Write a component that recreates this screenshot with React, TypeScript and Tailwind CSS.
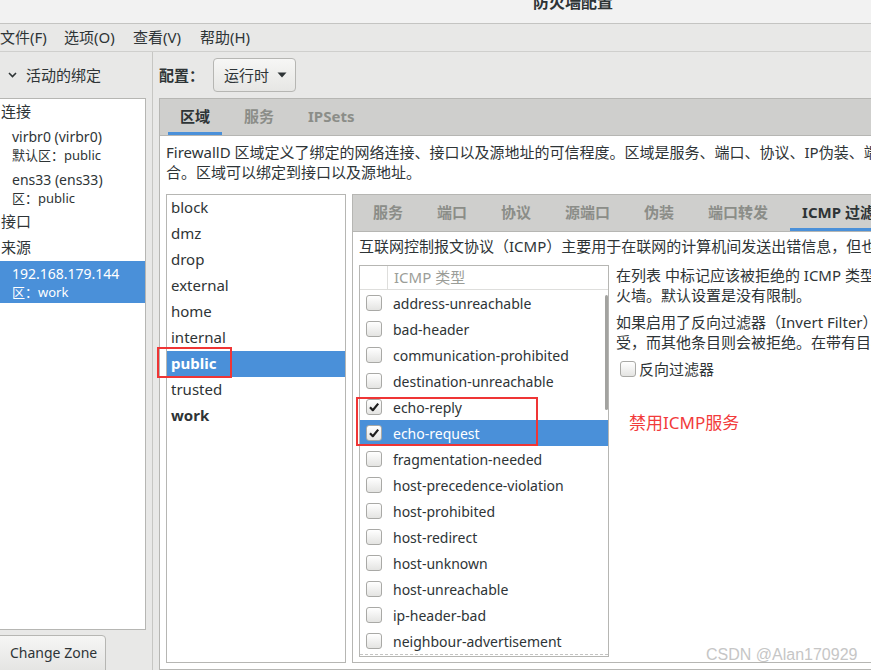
import React from 'react';

const zones = ['block', 'dmz', 'drop', 'external', 'home', 'internal', 'public', 'trusted', 'work'];
const boldZones = new Set(['public', 'work']);

const icmpTypes = [
  'address-unreachable',
  'bad-header',
  'communication-prohibited',
  'destination-unreachable',
  'echo-reply',
  'echo-request',
  'fragmentation-needed',
  'host-precedence-violation',
  'host-prohibited',
  'host-redirect',
  'host-unknown',
  'host-unreachable',
  'ip-header-bad',
  'neighbour-advertisement',
];
const checkedTypes = new Set(['echo-reply', 'echo-request']);

const Checkbox = ({ on }: { on?: boolean }) => (
  <span className="w-[16px] h-[16px] shrink-0 rounded-[3px] border border-[#a9a9a6] bg-linear-to-b from-white to-[#e4e4e2] flex items-center justify-center">
    {on && (
      <svg width="12" height="12" viewBox="0 0 12 12">
        <path d="M2 6.2 L4.8 9.2 L10.2 2.6" fill="none" stroke="#1e1e1e" strokeWidth="2.2" strokeLinejoin="round" />
      </svg>
    )}
  </span>
);

const Tab = ({ label, active }: { label: string; active?: boolean }) => (
  <div
    className={`h-full flex items-center px-[12px] pt-[2px] border-b-[3px] font-bold text-[15px] whitespace-nowrap ${
      active ? 'border-[#4a90d9] text-[#2e3436]' : 'border-transparent text-[#8b8d88]'
    }`}
  >
    {label}
  </div>
);

const App = () => {
  return (
    <div className="relative w-[871px] h-[670px] overflow-hidden bg-[#e8e8e7] text-[#2e3436] text-[14px] flex flex-col font-['Noto_Sans','Noto_Sans_CJK_SC',sans-serif]">
      {/* title bar */}
      <div className="h-[24px] shrink-0 bg-[#f2f2f2] border-b border-[#c4c4c2] overflow-hidden">
        <div className="pl-[533px] -mt-[8px] leading-[20px] text-[16px] font-bold text-[#2e3436]">防火墙配置</div>
      </div>

      {/* menu bar */}
      <div className="h-[28px] shrink-0 border-b border-[#cfcfcd] flex items-center text-[15px] whitespace-nowrap">
        <span className="w-[64px]">文件(F)</span>
        <span className="w-[69px]">选项(O)</span>
        <span className="w-[67px]">查看(V)</span>
        <span>帮助(H)</span>
      </div>

      <div className="flex flex-1 min-h-0">
        {/* left panel */}
        <div className="w-[153px] shrink-0 border-r border-[#c6c6c3] flex flex-col">
          <div className="h-[46px] shrink-0 flex items-center pl-[8px] gap-[9px] text-[15px]">
            <svg width="9" height="6" viewBox="0 0 9 6">
              <path d="M1 1 L4.5 4.5 L8 1" fill="none" stroke="#2e3436" strokeWidth="1.6" />
            </svg>
            <span>活动的绑定</span>
          </div>
          <div className="-ml-[4px] w-[150px] h-[532px] shrink-0 bg-white border border-[#b6b6b3] whitespace-nowrap">
            <div className="h-[24px] leading-[24px] pl-[4px] text-[15px]">连接</div>
            <div className="pl-[15px] pt-[4px] pb-[3px]">
              <div className="leading-[20px]">virbr0 (virbr0)</div>
              <div className="leading-[16px] text-[13px]">默认区：public</div>
            </div>
            <div className="pl-[15px] pt-[4px] pb-[3px]">
              <div className="leading-[20px]">ens33 (ens33)</div>
              <div className="leading-[16px] text-[13px]">区：public</div>
            </div>
            <div className="h-[25px] leading-[25px] pl-[4px] text-[15px]">接口</div>
            <div className="h-[27px] leading-[27px] pl-[4px] text-[15px]">来源</div>
            <div className="pl-[15px] pt-[3px] pb-[3px] bg-[#4a90d9] text-white">
              <div className="leading-[20px]">192.168.179.144</div>
              <div className="leading-[16px] text-[13px]">区：work</div>
            </div>
          </div>
          <div className="mt-[5px] -ml-[4px] w-[110px] h-[40px] shrink-0 rounded-[4px] border border-[#b6b6b3] bg-linear-to-b from-[#f6f6f5] to-[#e3e3e1] pl-[13px] pt-[6px] text-[14px] leading-[22px]">
            Change Zone
          </div>
        </div>

        {/* right panel */}
        <div className="flex-1 pl-[6px] pt-[6px] flex flex-col min-w-0">
          <div className="h-[34px] flex items-center">
            <span className="w-[54px] font-bold text-[15px]">配置：</span>
            <div className="h-[34px] w-[83px] rounded-[4px] border border-[#b6b6b3] bg-linear-to-b from-[#f6f6f5] to-[#e6e6e4] flex items-center pl-[10px] gap-[8px] text-[15px]">
              <span>运行时</span>
              <svg width="10" height="6" viewBox="0 0 10 6">
                <path d="M0.5 0.5 L9.5 0.5 L5 5.5 Z" fill="#2e3436" />
              </svg>
            </div>
          </div>

          {/* outer notebook */}
          <div className="mt-[6px] w-[740px] h-[572px] border border-[#b6b6b3] bg-white flex flex-col">
            <div className="h-[37px] shrink-0 bg-[#cfcfcd] border-b border-[#b6b6b3] flex gap-[10px] pl-[8px]">
              <Tab label="区域" active />
              <Tab label="服务" />
              <Tab label="IPSets" />
            </div>
            <div className="flex-1 min-h-0 flex flex-col px-[6px] pt-[6px] pb-[6px]">
              <div className="text-[15px] leading-[20px] whitespace-nowrap">
                <div>FirewallD 区域定义了绑定的网络连接、接口以及源地址的可信程度。区域是服务、端口、协议、IP伪装、端口/报文转发、icmp 和富规则的组</div>
                <div>合。区域可以绑定到接口以及源地址。</div>
              </div>
              <div className="mt-[12px] flex-1 min-h-0 flex">
                {/* zone list */}
                <div className="w-[180px] shrink-0 bg-white border border-[#b6b6b3]">
                  {zones.map((z) => (
                    <div
                      key={z}
                      className={`h-[26px] leading-[24px] pl-[4px] text-[15px] ${boldZones.has(z) ? 'font-bold' : ''} ${
                        z === 'public' ? 'bg-[#4a90d9] text-white' : ''
                      }`}
                    >
                      {z}
                    </div>
                  ))}
                </div>

                {/* inner notebook */}
                <div className="ml-[6px] w-[560px] shrink-0 border border-[#b6b6b3] bg-white flex flex-col">
                  <div className="h-[37px] shrink-0 bg-[#cfcfcd] border-b border-[#b6b6b3] flex gap-[10px] pl-[8px]">
                    <Tab label="服务" />
                    <Tab label="端口" />
                    <Tab label="协议" />
                    <Tab label="源端口" />
                    <Tab label="伪装" />
                    <Tab label="端口转发" />
                    <Tab label="ICMP 过滤器" active />
                  </div>
                  <div className="pl-[6px] pt-[4px] flex flex-col">
                    <div className="text-[15px] leading-[20px] whitespace-nowrap">
                      互联网控制报文协议（ICMP）主要用于在联网的计算机间发送出错信息，但也发送类似 ping 请求以及回应等信息。
                    </div>
                    <div className="mt-[9px] flex">
                      {/* icmp list */}
                      <div className="relative w-[250px] h-[392px] shrink-0 border border-[#b6b6b3] bg-white overflow-hidden">
                        <div className="h-[24px] flex border-b border-[#dededc]">
                          <div className="w-[28px] border-r border-[#dededc]" />
                          <div className="pl-[6px] leading-[22px] text-[15px] text-[#9b9d98]">ICMP 类型</div>
                        </div>
                        {icmpTypes.map((t) => (
                          <div
                            key={t}
                            className={`h-[26px] flex items-center pl-[6px] gap-[11px] text-[14px] whitespace-nowrap ${
                              t === 'echo-request' ? 'bg-[#4a90d9] text-white' : ''
                            }`}
                          >
                            <Checkbox on={checkedTypes.has(t)} />
                            <span>{t}</span>
                          </div>
                        ))}
                        <div className="border-t border-dashed border-[#c4c4c2]" />
                        <div className="absolute left-[245px] top-[29px] w-[3px] h-[115px] rounded-full bg-[#a3a3a0]" />
                      </div>

                      <div className="ml-[7px] text-[15px] leading-[20px] whitespace-nowrap">
                        <div>在列表 中标记应该被拒绝的 ICMP 类型。所有其他 ICMP 类型则被允许通过防</div>
                        <div>火墙。默认设置是没有限制。</div>
                        <div className="mt-[7px]">如果启用了反向过滤器（Invert Filter），则标记的 ICMP 条目将被接</div>
                        <div>受，而其他条目则会被拒绝。在带有目标 DROP 的区域中，它们会被丢弃。</div>
                        <div className="mt-[7px] ml-[4px] flex items-center gap-[3px] h-[20px]">
                          <Checkbox />
                          <span>反向过滤器</span>
                        </div>
                      </div>
                    </div>
                  </div>
                </div>
              </div>
            </div>
          </div>
        </div>
      </div>

      {/* annotations drawn over the screenshot */}
      <div className="absolute left-[157px] top-[347px] w-[75px] h-[31px] border-2 border-[#ef3535]" />
      <div className="absolute left-[356px] top-[397px] w-[182px] h-[49px] border-2 border-[#ef3535]" />
      <div className="absolute left-[629px] top-[412px] text-[17px] leading-[22px] text-[#f23b3b] whitespace-nowrap">禁用ICMP服务</div>
      <div className="absolute left-[706px] top-[645px] text-[16px] leading-[20px] text-[#c6c6c6] whitespace-nowrap font-['Liberation_Sans',sans-serif]">
        CSDN @Alan170929
      </div>
    </div>
  );
};

export default App;
